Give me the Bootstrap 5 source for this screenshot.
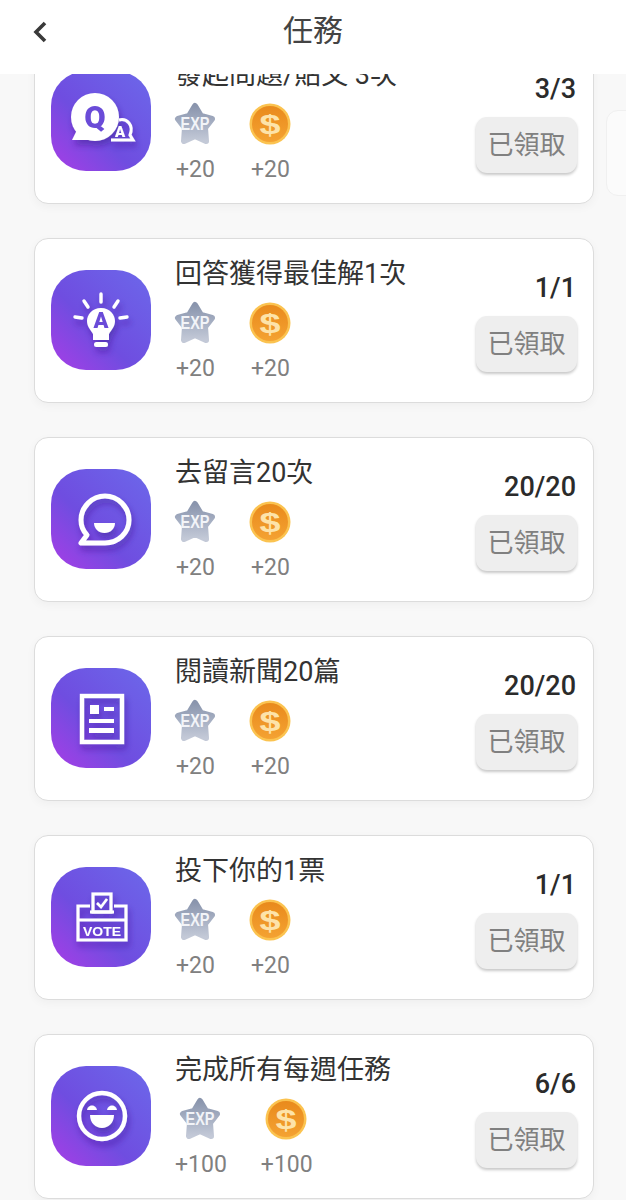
<!DOCTYPE html>
<html lang="zh-TW">
<head>
  <meta charset="UTF-8">
  <title>任務</title>
  <meta name="viewport" content="width=device-width, initial-scale=1">
  <link href="https://cdn.jsdelivr.net/npm/bootstrap@5.3.3/dist/css/bootstrap.min.css" rel="stylesheet">
  <style>
    html, body { height: 1200px; overflow: hidden; }
    body { background: #f8f8f8; font-family: Roboto, "Noto Sans CJK TC", sans-serif; position: relative; }
    .top-bar { height: 74px; background: #fff; position: relative; z-index: 2; padding: 0 0 10px 30px; }
    .top-title { position: absolute; left: 0; right: 0; top: 9px; text-align: center; font-size: 30px; line-height: 44px; color: #444; }
    .task-list { margin: -35px 32px 0 34px; gap: 34px; }
    .task-card { height: 165px; border: 1px solid #dcdcdc; border-radius: 14px; box-shadow: 0 3px 10px rgba(0, 0, 0, .04); padding: 31px 16px 0 16px; }
    .task-icon { width: 100px; height: 100px; flex: none; margin-right: 24px; }
    .task-title { font-size: 27px; line-height: 36px; color: #333; margin-top: -14px; white-space: nowrap; }
    .reward-row { gap: 34px; margin-top: 9px; }
    .reward-pic { margin-left: -1px; }
    .reward-num { font-size: 23px; line-height: 28px; color: #808080; margin-top: 10px; }
    .task-count { font-size: 27px; font-weight: 500; line-height: 30px; color: #2b2b2b; margin-top: 3px; margin-right: 1px; }
    .done-btn { width: 101px; height: 56px; margin-top: 13px; padding: 0; background: #eee; border: 0; border-radius: 11px; box-shadow: 0 2px 3px rgba(0, 0, 0, .22); font-size: 26px; color: #808080; }
    .next-card { position: absolute; left: 606px; top: 110px; width: 40px; height: 86px; background: #fbfbfb; border: 1px solid #f0f0f0; border-radius: 12px; }
  </style>
</head>
<body>
  <svg width="0" height="0" class="position-absolute">
    <defs>
      <linearGradient id="tileBg" x1="0" y1="1" x2="1" y2="0">
        <stop offset="0" stop-color="#a83de6"/>
        <stop offset=".42" stop-color="#6f4de0"/>
        <stop offset="1" stop-color="#6c68ea"/>
      </linearGradient>
      <linearGradient id="starBg" x1="0" y1="0" x2="0" y2="1">
        <stop offset="0" stop-color="#8a95ad"/>
        <stop offset=".55" stop-color="#a9b2c5"/>
        <stop offset="1" stop-color="#c3c9d7"/>
      </linearGradient>
      <linearGradient id="coinBg" x1="0" y1="0" x2="0" y2="1">
        <stop offset="0" stop-color="#e98a1c"/>
        <stop offset="1" stop-color="#f4a232"/>
      </linearGradient>
      <filter id="lift" x="-30%" y="-30%" width="160%" height="170%">
        <feDropShadow dx="2" dy="5" stdDeviation="3" flood-color="#3a1f8a" flood-opacity=".45"/>
      </filter>
      <symbol id="exp" viewBox="0 0 42 44">
        <path d="M21 4 27 14 38 17 31 26 32 39 21 34 10 39 11 26 4 17 15 14Z" fill="url(#starBg)" stroke="url(#starBg)" stroke-width="6" stroke-linejoin="round"/>
        <text x="21" y="28" text-anchor="middle" font-family="'Liberation Sans', sans-serif" font-size="18" font-weight="700" fill="#f2f4f8" textLength="29" lengthAdjust="spacingAndGlyphs">EXP</text>
      </symbol>
      <symbol id="coin" viewBox="0 0 42 42">
        <circle cx="21" cy="21" r="20.500" fill="#fbc350"/>
        <circle cx="21" cy="21" r="18" fill="url(#coinBg)"/>
        <text x="21" y="31" text-anchor="middle" font-family="'Liberation Sans', sans-serif" font-size="28" font-weight="700" fill="#fde3a9" textLength="21" lengthAdjust="spacingAndGlyphs">$</text>
      </symbol>
    </defs>
  </svg>

  <div class="next-card"></div>

  <div class="top-bar d-flex align-items-center">
    <svg width="20" height="26" viewBox="0 0 20 26"><path d="M15 4 6 13 15 22" fill="none" stroke="#3a3a3a" stroke-width="3.6"/></svg>
    <div class="top-title">任務</div>
  </div>

  <div class="task-list d-flex flex-column">

    <div class="task-card bg-white d-flex">
      <svg class="task-icon" viewBox="0 0 100 100">
        <rect width="100" height="100" rx="35" fill="url(#tileBg)"/>
        <g filter="url(#lift)">
          <path d="M60 69H82L79 64C83 54 76 47 68 49" fill="none" stroke="#fff" stroke-width="3"/>
          <text x="69" y="66" text-anchor="middle" font-family="Roboto, sans-serif" font-size="15" font-weight="900" fill="#fff">A</text>
          <circle cx="44" cy="46" r="24" fill="#fff"/>
          <path d="M21 69H44V55H28Z" fill="#fff"/>
          <text x="44" y="57" text-anchor="middle" font-family="Roboto, sans-serif" font-size="31" font-weight="900" fill="#6a4bd8">Q</text>
        </g>
      </svg>
      <div class="flex-grow-1">
        <div class="task-title">發起問題/貼文 3次</div>
        <div class="reward-row d-flex">
          <div class="d-flex flex-column align-items-center"><svg class="reward-pic" width="42" height="44"><use href="#exp"/></svg><div class="reward-num">+20</div></div>
          <div class="d-flex flex-column align-items-center"><svg class="reward-pic" width="42" height="44"><use href="#coin"/></svg><div class="reward-num">+20</div></div>
        </div>
      </div>
      <div class="d-flex flex-column align-items-end">
        <div class="task-count">3/3</div>
        <button class="done-btn" type="button">已領取</button>
      </div>
    </div>

    <div class="task-card bg-white d-flex">
      <svg class="task-icon" viewBox="0 0 100 100">
        <rect width="100" height="100" rx="35" fill="url(#tileBg)"/>
        <g filter="url(#lift)">
          <path d="M50 24V32M33 31 37 37M67 31 63 37M24 47 31 48M76 47 69 48" stroke="#fff" stroke-width="3.4" stroke-linecap="round" fill="none"/>
          <path d="M50 38C41 38 36 45 36 51 36 57 40 60 42 64V70H58V64C60 60 64 57 64 51 64 45 59 38 50 38Z" fill="#fff"/>
          <rect x="43" y="72" width="14" height="5" rx="2.5" fill="#fff"/>
          <text x="50" y="58" text-anchor="middle" font-family="Roboto, sans-serif" font-size="22" font-weight="900" fill="#6a4bd8">A</text>
        </g>
      </svg>
      <div class="flex-grow-1">
        <div class="task-title">回答獲得最佳解1次</div>
        <div class="reward-row d-flex">
          <div class="d-flex flex-column align-items-center"><svg class="reward-pic" width="42" height="44"><use href="#exp"/></svg><div class="reward-num">+20</div></div>
          <div class="d-flex flex-column align-items-center"><svg class="reward-pic" width="42" height="44"><use href="#coin"/></svg><div class="reward-num">+20</div></div>
        </div>
      </div>
      <div class="d-flex flex-column align-items-end">
        <div class="task-count">1/1</div>
        <button class="done-btn" type="button">已領取</button>
      </div>
    </div>

    <div class="task-card bg-white d-flex">
      <svg class="task-icon" viewBox="0 0 100 100">
        <rect width="100" height="100" rx="35" fill="url(#tileBg)"/>
        <g filter="url(#lift)">
          <path d="M30 74H54C67 74 78 64 78 51 78 38 67 27 54 27 41 27 30 38 30 51 30 57 32 62 36 66Z" fill="none" stroke="#fff" stroke-width="5" stroke-linejoin="round"/>
          <path d="M43 54H64C64 60 59 64 53.500 64 48 64 43 60 43 54Z" fill="#fff"/>
        </g>
      </svg>
      <div class="flex-grow-1">
        <div class="task-title">去留言20次</div>
        <div class="reward-row d-flex">
          <div class="d-flex flex-column align-items-center"><svg class="reward-pic" width="42" height="44"><use href="#exp"/></svg><div class="reward-num">+20</div></div>
          <div class="d-flex flex-column align-items-center"><svg class="reward-pic" width="42" height="44"><use href="#coin"/></svg><div class="reward-num">+20</div></div>
        </div>
      </div>
      <div class="d-flex flex-column align-items-end">
        <div class="task-count">20/20</div>
        <button class="done-btn" type="button">已領取</button>
      </div>
    </div>

    <div class="task-card bg-white d-flex">
      <svg class="task-icon" viewBox="0 0 100 100">
        <rect width="100" height="100" rx="35" fill="url(#tileBg)"/>
        <g filter="url(#lift)">
          <rect x="31" y="28" width="40" height="46" fill="none" stroke="#fff" stroke-width="4.4"/>
          <path d="M39 37H48V46H39ZM53 39H63V43H53ZM38 51H63V55H38ZM38 60H63V65H38Z" fill="#fff"/>
        </g>
      </svg>
      <div class="flex-grow-1">
        <div class="task-title">閱讀新聞20篇</div>
        <div class="reward-row d-flex">
          <div class="d-flex flex-column align-items-center"><svg class="reward-pic" width="42" height="44"><use href="#exp"/></svg><div class="reward-num">+20</div></div>
          <div class="d-flex flex-column align-items-center"><svg class="reward-pic" width="42" height="44"><use href="#coin"/></svg><div class="reward-num">+20</div></div>
        </div>
      </div>
      <div class="d-flex flex-column align-items-end">
        <div class="task-count">20/20</div>
        <button class="done-btn" type="button">已領取</button>
      </div>
    </div>

    <div class="task-card bg-white d-flex">
      <svg class="task-icon" viewBox="0 0 100 100">
        <rect width="100" height="100" rx="35" fill="url(#tileBg)"/>
        <g filter="url(#lift)">
          <path d="M39 39H27V73H75V39H63M39 45H63M27 53H75" fill="none" stroke="#fff" stroke-width="3.2"/>
          <rect x="42" y="27" width="18" height="18" fill="none" stroke="#fff" stroke-width="3.2"/>
          <path d="M46 36 50 40 56 32" fill="none" stroke="#fff" stroke-width="2.6"/>
          <text x="51" y="69" text-anchor="middle" font-family="'Liberation Sans', sans-serif" font-size="13" font-weight="700" fill="#fff" textLength="38" lengthAdjust="spacingAndGlyphs">VOTE</text>
        </g>
      </svg>
      <div class="flex-grow-1">
        <div class="task-title">投下你的1票</div>
        <div class="reward-row d-flex">
          <div class="d-flex flex-column align-items-center"><svg class="reward-pic" width="42" height="44"><use href="#exp"/></svg><div class="reward-num">+20</div></div>
          <div class="d-flex flex-column align-items-center"><svg class="reward-pic" width="42" height="44"><use href="#coin"/></svg><div class="reward-num">+20</div></div>
        </div>
      </div>
      <div class="d-flex flex-column align-items-end">
        <div class="task-count">1/1</div>
        <button class="done-btn" type="button">已領取</button>
      </div>
    </div>

    <div class="task-card bg-white d-flex">
      <svg class="task-icon" viewBox="0 0 100 100">
        <rect width="100" height="100" rx="35" fill="url(#tileBg)"/>
        <g filter="url(#lift)">
          <circle cx="51" cy="50" r="23" fill="none" stroke="#fff" stroke-width="4.4"/>
          <path d="M36 44C37 38 45 38 46 44ZM56 44C57 38 65 38 66 44ZM39 49H63C63 57 57 62 51 62 45 62 39 57 39 49Z" fill="#fff"/>
        </g>
      </svg>
      <div class="flex-grow-1">
        <div class="task-title">完成所有每週任務</div>
        <div class="reward-row d-flex">
          <div class="d-flex flex-column align-items-center"><svg class="reward-pic" width="42" height="44"><use href="#exp"/></svg><div class="reward-num">+100</div></div>
          <div class="d-flex flex-column align-items-center"><svg class="reward-pic" width="42" height="44"><use href="#coin"/></svg><div class="reward-num">+100</div></div>
        </div>
      </div>
      <div class="d-flex flex-column align-items-end">
        <div class="task-count">6/6</div>
        <button class="done-btn" type="button">已領取</button>
      </div>
    </div>

  </div>

  <script src="https://cdn.jsdelivr.net/npm/bootstrap@5.3.3/dist/js/bootstrap.bundle.min.js"></script>
</body>
</html>
